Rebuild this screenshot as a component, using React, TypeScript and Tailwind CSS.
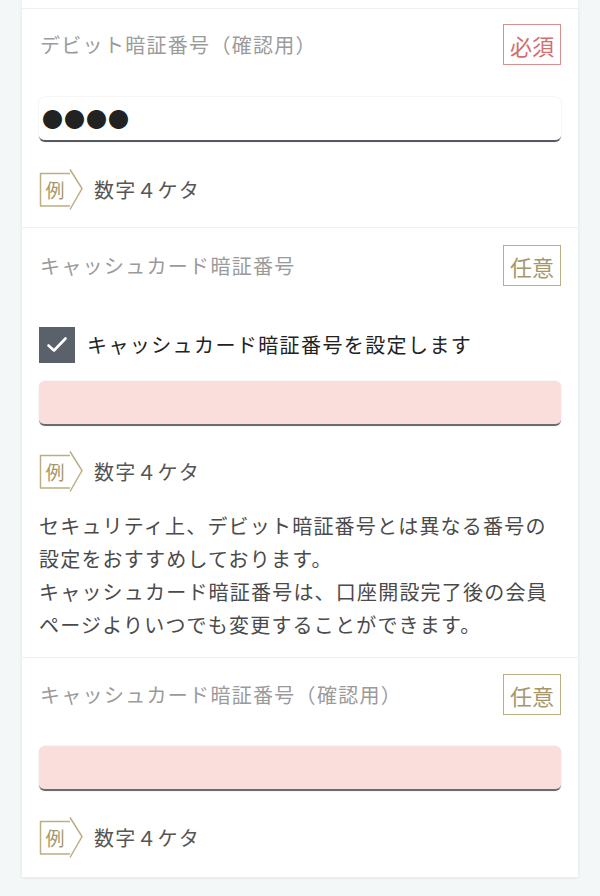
import { ReactNode } from 'react'

const font = "font-['Noto_Sans_CJK_JP','Noto_Sans',sans-serif]"

function Badge({ kind }: { kind: 'required' | 'optional' }) {
  const required = kind === 'required'
  return (
    <div
      className={`flex h-[41px] w-[58px] items-center justify-center border-[1.5px] text-[22px] leading-none ${
        required ? 'border-[#dc8e8e] text-[#d26f6f]' : 'border-[#bcae83] text-[#a6976b]'
      }`}
    >
      {required ? '必須' : '任意'}
    </div>
  )
}

function FieldHeader({ label, kind }: { label: string; kind: 'required' | 'optional' }) {
  return (
    <div className="flex h-[41px] items-center justify-between">
      <span className="pl-[1px] text-[20px] tracking-[1.3px] text-[#9b9b9b]">{label}</span>
      <Badge kind={kind} />
    </div>
  )
}

function Example({ children }: { children: ReactNode }) {
  return (
    <div className="flex h-[41px] items-center">
      <div className="relative flex h-[41px] w-[46px] items-center">
        <svg className="absolute inset-0" width="46" height="41" viewBox="0 0 46 41" fill="none">
          <path d="M31 4.5H1.5V37H31" stroke="#bcae83" strokeWidth="1.5" />
          <path d="M31 0.5L43 19.5L31 40.5" stroke="#bcae83" strokeWidth="1.5" />
        </svg>
        <span className="relative w-[32px] text-center text-[19px] leading-none text-[#a6976b]">例</span>
      </div>
      <span className="ml-[9px] text-[20px] tracking-[1.2px] text-[#555]">{children}</span>
    </div>
  )
}

function PinInput({ value, error }: { value?: string; error?: boolean }) {
  return (
    <div
      className={`flex h-[45px] items-center rounded-[6px] border-b-2 px-[3px] shadow-[0_0_2px_rgba(0,0,0,0.12)] ${
        error ? 'border-[#6b6b6b] bg-[#f9dedc]' : 'border-[#555a60] bg-white'
      }`}
    >
      {value && (
        <span className="text-[21px] leading-none tracking-[1px] text-[#222]">{value}</span>
      )}
    </div>
  )
}

export default function App() {
  return (
    <div className={`min-h-[896px] bg-[#f4f7f8] px-[22px] ${font}`}>
      <div className="bg-white shadow-[0_1px_4px_rgba(0,0,0,0.08)]">
        <div className="h-[9px] border-b border-[#eef1f3]" />

        {/* Debit PIN (confirm) */}
        <section className="border-b border-[#eef1f3] px-[17px] pb-[17px] pt-[15px]">
          <FieldHeader label="デビット暗証番号（確認用）" kind="required" />
          <div className="mt-[32px]">
            <PinInput value="●●●●" />
          </div>
          <div className="mt-[27px]">
            <Example>数字４ケタ</Example>
          </div>
        </section>

        {/* Cash card PIN */}
        <section className="border-b border-[#eef1f3] px-[17px] pb-[16px] pt-[17px]">
          <FieldHeader label="キャッシュカード暗証番号" kind="optional" />
          <label className="mt-[41px] flex items-center gap-[12px]">
            <span className="flex h-[36px] w-[36px] items-center justify-center bg-[#5b616b]">
              <svg width="22" height="22" viewBox="0 0 22 22" fill="none">
                <path d="M2.5 11.5L8 16.5L19.5 4.5" stroke="white" strokeWidth="2.6" strokeLinecap="round" strokeLinejoin="round" />
              </svg>
            </span>
            <span className="text-[20px] tracking-[1.4px] text-[#222]">
              キャッシュカード暗証番号を設定します
            </span>
          </label>
          <div className="mt-[18px]">
            <PinInput error />
          </div>
          <div className="mt-[25px]">
            <Example>数字４ケタ</Example>
          </div>
          <p className="mt-[17px] text-[20px] leading-[33px] tracking-[1.2px] text-[#4a4a4a]">
            セキュリティ上、デビット暗証番号とは異なる番号の設定をおすすめしております。
            <br />
            キャッシュカード暗証番号は、口座開設完了後の会員ページよりいつでも変更することができます。
          </p>
        </section>

        {/* Cash card PIN (confirm) */}
        <section className="px-[17px] pb-[19px] pt-[16px]">
          <FieldHeader label="キャッシュカード暗証番号（確認用）" kind="optional" />
          <div className="mt-[31px]">
            <PinInput error />
          </div>
          <div className="mt-[26px]">
            <Example>数字４ケタ</Example>
          </div>
        </section>
      </div>
    </div>
  )
}
